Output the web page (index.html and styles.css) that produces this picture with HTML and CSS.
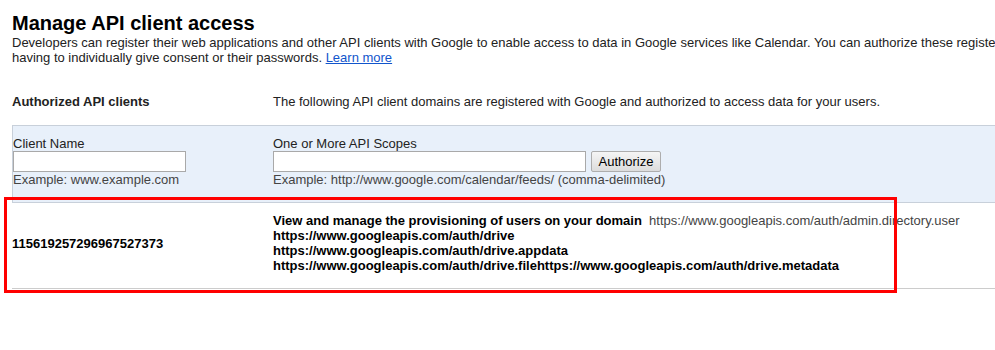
FILE: index.html
```html
<!DOCTYPE html>
<html lang="en">
<head>
    <meta charset="UTF-8">
    <title>Manage API client access</title>
    <link rel="stylesheet" href="styles.css">
</head>
<body>

    <div class="page">
        <h1 class="title">Manage API client access</h1>
        <p class="intro">
            Developers can register their web applications and other API clients with Google to enable access to data in Google services like Calendar. You can authorize these registered clients to access your user data without your users<br>
            having to individually give consent or their passwords. <a href="#" class="learn-more">Learn more</a>
        </p>

        <div class="section-head">
            <div class="section-label">Authorized API clients</div>
            <div class="section-desc">The following API client domains are registered with Google and authorized to access data for your users.</div>
        </div>

        <!-- 添加新客户端 -->
        <form class="add-panel">
            <div class="field">
                <label class="field-label">Client Name</label>
                <input type="text" class="text-input name-input">
                <div class="field-hint">Example: www.example.com</div>
            </div>
            <div class="field">
                <label class="field-label">One or More API Scopes</label>
                <div class="input-line">
                    <input type="text" class="text-input scope-input">
                    <button type="button" class="btn">Authorize</button>
                </div>
                <div class="field-hint">Example: http://www.google.com/calendar/feeds/ (comma-delimited)</div>
            </div>
        </form>

        <!-- 已授权客户端列表 -->
        <div class="client-row">
            <div class="client-id">115619257296967527373</div>
            <div class="client-scopes">
                <div><b>View and manage the provisioning of users on your domain</b>&nbsp; <span class="scope-url">https://www.googleapis.com/auth/admin.directory.user</span></div>
                <div><b>https://www.googleapis.com/auth/drive</b></div>
                <div><b>https://www.googleapis.com/auth/drive.appdata</b></div>
                <div><b>https://www.googleapis.com/auth/drive.filehttps://www.googleapis.com/auth/drive.metadata</b></div>
            </div>
        </div>

        <!-- 标注框 -->
        <div class="highlight"></div>
    </div>

</body>
</html>
```

FILE: styles.css
```css
 body {
     font-family: "Liberation Sans", Arial, sans-serif;
     font-size: 13px;
     line-height: 15px;
     color: #222;
     margin: 0;
     background-color: #fff;
     overflow: hidden;
 }

 .page {
     position: relative; /* 标注框定位 */
     padding: 11px 0 40px 12px;
     width: 1400px;
 }

 .title {
     font-size: 20px;
     line-height: 24px;
     font-weight: bold;
     color: #000;
     margin: 0;
 }

 .intro {
     margin: 0;
     white-space: nowrap;
 }

 .learn-more {
     color: #15c;
 }

 .section-head {
     display: grid;
     grid-template-columns: 261px 1fr;
     margin-top: 29px;
     margin-bottom: 16px;
 }

 .section-label {
     font-weight: bold;
 }

 /* 添加面板 */
 .add-panel {
     display: grid;
     grid-template-columns: 261px 1fr;
     margin: 0;
     padding: 10px 0 15px 0;
     background-color: #e8f0fa;
     border-top: 1px solid #c8d0da;
     border-left: 1px solid #c8d0da;
     border-bottom: 1px solid #c8d0da;
 }

 .field-label {
     display: block;
 }

 .input-line {
     display: flex;
     align-items: center;
     gap: 5px;
 }

 .text-input {
     display: block;
     box-sizing: border-box;
     height: 21px;
     margin: 0;
     padding: 1px 3px;
     border: 1px solid #a9a9a9;
     background-color: #fff;
     font-family: inherit;
     font-size: 13px;
 }

 .name-input {
     width: 173px;
 }

 .scope-input {
     width: 313px;
 }

 .btn {
     box-sizing: border-box;
     height: 21px;
     width: 70px;
     padding: 0;
     border: 1px solid #adadad;
     border-radius: 2px;
     background: linear-gradient(#f5f5f5, #dcdcdc);
     font-family: inherit;
     font-size: 13px;
     color: #000;
 }

 .field-hint {
     color: #444;
 }

 .field:last-child {
     margin-left: -1px;
 }

 /* 客户端行 */
 .client-row {
     display: grid;
     grid-template-columns: 261px 1fr;
     align-items: center;
     padding: 10px 0 15px 0;
     border-bottom: 1px solid #ccc;
     color: #000;
 }

 .client-id {
     font-weight: bold;
 }

 .scope-url {
     color: #444;
 }

 .highlight {
     position: absolute;
     left: 4px;
     top: 197px;
     width: 887px;
     height: 90px;
     border: 3px solid #f00;
 }
```
